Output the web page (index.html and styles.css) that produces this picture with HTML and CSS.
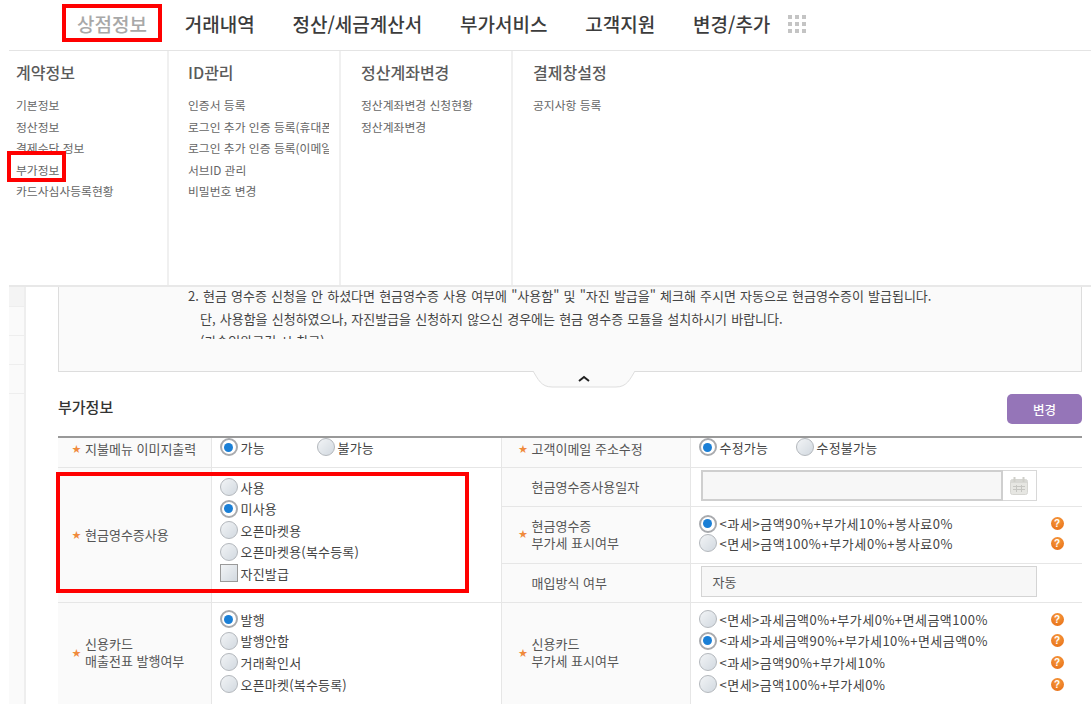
FILE: index.html
```html
<!DOCTYPE html>
<html lang="ko">
<head>
<meta charset="utf-8">
<title>부가정보</title>
<link rel="stylesheet" href="styles.css">
</head>
<body>
<div class="page">
  <nav class="nav">
    <a class="nav-item is-active">상점정보</a>
    <a class="nav-item">거래내역</a>
    <a class="nav-item">정산/세금계산서</a>
    <a class="nav-item">부가서비스</a>
    <a class="nav-item">고객지원</a>
    <a class="nav-item">변경/추가</a>
    <svg class="grid-icon" width="18" height="18" viewBox="0 0 18 18"><g fill="#c4c4c4"><rect x="0" y="0" width="4" height="4"/><rect x="7" y="0" width="4" height="4"/><rect x="14" y="0" width="4" height="4"/><rect x="0" y="7" width="4" height="4"/><rect x="7" y="7" width="4" height="4"/><rect x="14" y="7" width="4" height="4"/><rect x="0" y="14" width="4" height="4"/><rect x="7" y="14" width="4" height="4"/><rect x="14" y="14" width="4" height="4"/></g></svg>
  </nav>
  <div class="menu">
    <section class="menu-col menu-col-first">
      <h3>계약정보</h3>
      <ul><li>기본정보</li><li>정산정보</li><li>결제수단 정보</li><li>부가정보</li><li>카드사심사등록현황</li></ul>
    </section>
    <section class="menu-col">
      <h3>ID관리</h3>
      <ul><li>인증서 등록</li><li>로그인 추가 인증 등록(휴대폰)</li><li>로그인 추가 인증 등록(이메일)</li><li>서브ID 관리</li><li>비밀번호 변경</li></ul>
    </section>
    <section class="menu-col">
      <h3>정산계좌변경</h3>
      <ul><li>정산계좌변경 신청현황</li><li>정산계좌변경</li></ul>
    </section>
    <section class="menu-col menu-col-last">
      <h3>결제창설정</h3>
      <ul><li>공지사항 등록</li></ul>
    </section>
  </div>
  <div class="main">
    <aside class="side"><div class="side-row side-top"></div><div class="side-row"></div><div class="side-row"></div><div class="side-row"></div></aside>
    <div class="content">
      <div class="notice">
        <div class="notice-scroll">
          <p>2. 현금 영수증 신청을 안 하셨다면 현금영수증 사용 여부에 "사용함" 및 "자진 발급을" 체크해 주시면 자동으로 현금영수증이 발급됩니다.</p>
          <p class="indent">단, 사용함을 신청하였으나, 자진발급을 신청하지 않으신 경우에는 현금 영수증 모듈을 설치하시기 바랍니다.</p>
          <p class="indent">(가승인완료건 시 참고)</p>
        </div>
      </div>
      <div class="tab-wrap">
        <svg class="tab" width="104" height="17" viewBox="0 0 104 17"><path d="M1 0 C6 8 9 16 20 16 H84 C95 16 98 8 103 0" fill="#fafafa" stroke="#dedede"/><path d="M47 10 L52 6 L57 10" fill="none" stroke="#222" stroke-width="2"/></svg>
      </div>
      <div class="section-head">
        <h2>부가정보</h2>
        <button class="btn-change" type="button">변경</button>
      </div>
      <table class="form">
        <colgroup><col class="c1"><col class="c2"><col class="c3"><col class="c4"></colgroup>
        <tr class="r1">
          <th><span class="star">★</span><span class="lbl">지불메뉴 이미지출력</span></th>
          <td><div class="inline-opts"><label class="opt w97"><i class="radio on"></i>가능</label><label class="opt"><i class="radio"></i>불가능</label></div></td>
          <th class="rt"><span class="star">★</span><span class="lbl">고객이메일 주소수정</span></th>
          <td><div class="inline-opts"><label class="opt w97"><i class="radio on"></i>수정가능</label><label class="opt"><i class="radio"></i>수정불가능</label></div></td>
        </tr>
        <tr class="r2">
          <th rowspan="3" class="span-label"><span class="star">★</span><span class="lbl">현금영수증사용</span></th>
          <td rowspan="3" class="top pay">
            <label class="opt"><i class="radio"></i>사용</label>
            <label class="opt"><i class="radio on"></i>미사용</label>
            <label class="opt"><i class="radio"></i>오픈마켓용</label>
            <label class="opt"><i class="radio"></i>오픈마켓용(복수등록)</label>
            <label class="opt"><i class="check"></i>자진발급</label>
          </td>
          <th class="rt"><span class="star blank"></span><span class="lbl">현금영수증사용일자</span></th>
          <td>
            <div class="date-field"><div class="date-input"></div><div class="date-btn">
              <svg width="18" height="18" viewBox="0 0 18 18"><rect x="0.5" y="2.5" width="17" height="15" rx="2" fill="#e6e6e2" stroke="#d6d6d2"/><rect x="1" y="3" width="16" height="3" fill="#d8d8d4"/><rect x="3.5" y="0" width="2" height="5" fill="#cfcfc9"/><rect x="12.5" y="0" width="2" height="5" fill="#cfcfc9"/><g fill="#c6c6c2"><rect x="3" y="9" width="12" height="1"/><rect x="3" y="12" width="12" height="1"/><rect x="6" y="8" width="1" height="7"/><rect x="11" y="8" width="1" height="7"/></g></svg>
            </div></div>
          </td>
        </tr>
        <tr class="r3">
          <th class="rt"><span class="star">★</span><span class="lbl">현금영수증<br>부가세 표시여부</span></th>
          <td>
            <label class="opt opt-tight help-row wide"><i class="radio on"></i>&lt;과세&gt;금액90%+부가세10%+봉사료0%<i class="help">?</i></label>
            <label class="opt opt-tight help-row wide"><i class="radio"></i>&lt;면세&gt;금액100%+부가세0%+봉사료0%<i class="help">?</i></label>
          </td>
        </tr>
        <tr class="r4">
          <th class="rt"><span class="star blank"></span><span class="lbl">매입방식 여부</span></th>
          <td><div class="readonly">자동</div></td>
        </tr>
        <tr class="r5">
          <th class="shift"><span class="star">★</span><span class="lbl">신용카드<br>매출전표 발행여부</span></th>
          <td class="top">
            <label class="opt"><i class="radio on"></i>발행</label>
            <label class="opt"><i class="radio"></i>발행안함</label>
            <label class="opt"><i class="radio"></i>거래확인서</label>
            <label class="opt"><i class="radio"></i>오픈마켓(복수등록)</label>
          </td>
          <th class="rt shift"><span class="star">★</span><span class="lbl">신용카드<br>부가세 표시여부</span></th>
          <td class="top">
            <label class="opt help-row wide"><i class="radio"></i>&lt;면세&gt;과세금액0%+부가세0%+면세금액100%<i class="help">?</i></label>
            <label class="opt help-row wide"><i class="radio on"></i>&lt;과세&gt;과세금액90%+부가세10%+면세금액0%<i class="help">?</i></label>
            <label class="opt help-row wide"><i class="radio"></i>&lt;과세&gt;금액90%+부가세10%<i class="help">?</i></label>
            <label class="opt help-row wide"><i class="radio"></i>&lt;면세&gt;금액100%+부가세0%<i class="help">?</i></label>
          </td>
        </tr>
      </table>
    </div>
  </div>
  <div class="mark mark-nav"></div>
  <div class="mark mark-link"></div>
  <div class="mark mark-form"></div>
</div>
</body>
</html>
```
FILE: styles.css
```css
* { box-sizing: border-box; }
html, body { margin: 0; height: 704px; overflow: hidden; background: #fff; }
body { font-family: "Noto Sans CJK KR", "Noto Sans", sans-serif; color: #555; font-size: 13px; }
.page { position: relative; height: 704px; overflow: hidden; display: flex; flex-direction: column; }

.nav { height: 50px; flex: none; display: flex; align-items: center; padding-left: 77px; gap: 37.8px; }
.nav-item { font-size: 19px; font-weight: 500; color: #3c3c3c; line-height: 1; padding-bottom: 4px; }
.nav-item.is-active { color: #a8a8a8; }
.grid-icon { margin-left: -20px; margin-bottom: 3px; }

.menu { height: 237px; flex: none; margin-left: 9px; display: flex; border-top: 1px solid #e4e4e4; border-bottom: 2px solid #e8e8e8; background: #fff; }
.menu-col { width: 172px; flex: none; padding: 11px 0 0 20px; border-right: 2px solid #f0f0f0; overflow: hidden; }
.menu-col-first { width: 160px; padding-left: 7px; }
.menu-col-first + .menu-col { padding-left: 19px; }
.menu-col-last { flex: 1; border-right: 0; }
.menu-col h3 { margin: 0 0 12px; font-size: 16px; font-weight: 500; color: #5a5a5a; line-height: 20px; }
.menu-col ul { margin: 0; padding: 0; list-style: none; width: 141px; overflow: hidden; }
.menu-col li { font-size: 11.8px; line-height: 21.6px; height: 21.6px; color: #666; white-space: nowrap; }

.main { flex: 1; display: flex; margin-left: 9px; min-height: 0; }
.side { width: 17px; flex: none; background: #fafafa; border-right: 2px solid #eee; }
.side-row { height: 29px; border-bottom: 1px solid #eee; }
.side-top { height: 20px; background: #f4f4f4; }
.content { width: 1024px; margin-left: 32px; flex: none; }

.notice { height: 85px; overflow: hidden; background: #fafafa; border: 1px solid #ddd; border-top: 0; padding: 0 0 0 129px; }
.notice-scroll { height: 54px; overflow: hidden; margin-top: -2px; }
.notice p { margin: 0; line-height: 22.5px; color: #444; font-size: 13px; word-spacing: 0.5px; white-space: nowrap; }
.notice .indent { padding-left: 12px; }

.tab-wrap { height: 16px; display: flex; justify-content: center; padding-left: 28px; }
.tab { display: block; margin-top: -1px; }

.section-head { height: 48px; display: flex; justify-content: space-between; align-items: flex-start; padding-top: 6px; }
.section-head h2 { margin: 3px 0 0; font-size: 15px; font-weight: 500; color: #333; line-height: 20px; }
.btn-change { width: 75px; height: 30px; border: 0; border-radius: 5px; background: #9575b8; color: #fff; font: 500 12.5px "Noto Sans CJK KR", sans-serif; }

.form { width: 1024px; border-collapse: collapse; table-layout: fixed; border-top: 2px solid #999; }
.c1 { width: 153px; } .c2 { width: 290px; } .c3 { width: 189px; } .c4 { width: 392px; }
.form th, .form td { padding: 0; border-bottom: 1px solid #e6e6e6; vertical-align: middle; font-weight: 400; text-align: left; line-height: 17px; }
.form th { background: #fafafa; border-right: 1px solid #e6e6e6; padding-left: 14px; color: #555; font-size: 13px; white-space: nowrap; }
.form th.rt { border-left: 1px solid #e6e6e6; padding-left: 17px; }
.form td { padding-left: 9px; color: #444; font-size: 13px; }
.form td.top { vertical-align: top; padding-top: 6px; }
.form td.pay { padding-top: 9px; }
.r1 { height: 30px; } .r2 { height: 39px; } .r3 { height: 57px; } .r4 { height: 39px; } .r5 { height: 110px; }
.r1 th { padding-bottom: 9px; }
.r1 td { padding-bottom: 10px; }
.r1 .opt { height: 18px; }
.r2 th.rt, .r2 td, .r3 th.rt, .r3 td, .r4 th.rt, .r4 td { padding-bottom: 2px; }
.form th.span-label { padding-bottom: 2px; }
.form td.pay { padding-bottom: 0; }
.form th.shift { padding-bottom: 10px; }
.star { display: inline-block; width: 13px; color: #f08a3c; font-size: 9px; vertical-align: middle; }
.star.blank { height: 1px; }
.lbl { display: inline-block; vertical-align: middle; }

.opt { display: flex; align-items: center; gap: 3px; height: 21.6px; letter-spacing: 0.2px; white-space: nowrap; }
.pay .opt { height: 21.5px; }
.wide { letter-spacing: 0.48px; }
.opt-tight.wide { height: 19.5px; letter-spacing: 0.6px; }
.inline-opts { display: flex; }
.w97 { width: 97px; }
.radio, .check { display: block; flex: none; width: 18px; height: 18px; margin-left: -1px; border: 1.5px solid #b4b8bd; background: linear-gradient(135deg, #f2f4f6, #d2d9e0); }
.radio { border-radius: 50%; position: relative; }
.radio.on { background: #fff; border: 2px solid #a8aaae; }
.radio.on::after { content: ""; position: absolute; left: 2.5px; top: 2.5px; width: 9px; height: 9px; border-radius: 50%; background: #1a7fd6; }
.check { border-color: #9a9a9a; border-radius: 0; }

.date-field { display: flex; width: 336px; height: 31px; margin-left: 1px; border: 1px solid #d8d8d8; }
.date-input { flex: 1; background: #f7f7f7; border: 2px solid #cfcfcf; margin: -1px 0 -1px -1px; }
.date-btn { width: 33px; display: flex; align-items: center; justify-content: center; }
.readonly { width: 336px; height: 31px; margin-left: 1px; border: 1px solid #d4d4d4; background: #f7f7f7; line-height: 29px; padding-left: 11px; color: #555; }

.help-row { position: relative; }
.help { position: absolute; left: 351px; top: 50%; margin-top: -6.5px; width: 13px; height: 13px; border-radius: 50%; background: radial-gradient(circle at 50% 30%, #f79a3e, #e56a12); color: #fff; font: 700 10px/13px "Liberation Sans", sans-serif; letter-spacing: 0; text-align: center; }

.mark { position: absolute; border: 4px solid #f00; pointer-events: none; }
.mark-nav { left: 62px; top: 4px; width: 100px; height: 38px; }
.mark-link { left: 7px; top: 151px; width: 59px; height: 31px; }
.mark-form { left: 56px; top: 472px; width: 413px; height: 121px; }
```
